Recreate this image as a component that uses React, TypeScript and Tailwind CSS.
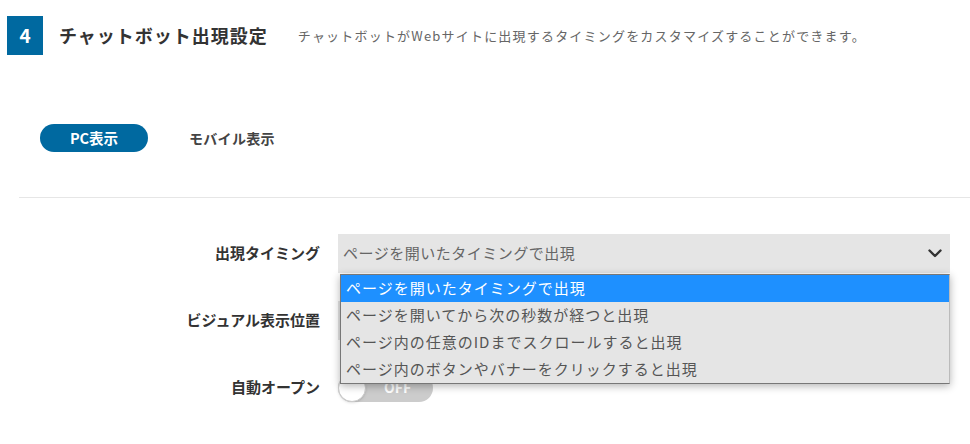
import React from "react";

const FONT = { fontFamily: '"Noto Sans CJK JP", "Noto Sans", sans-serif' };

function Chevron() {
  return (
    <svg width="14" height="9" viewBox="0 0 14 9" className="block">
      <path d="M1.5 1.5 L7 7 L12.5 1.5" fill="none" stroke="#333" strokeWidth="2.4" strokeLinecap="round" strokeLinejoin="round" />
    </svg>
  );
}

const options = [
  "ページを開いたタイミングで出現",
  "ページを開いてから次の秒数が経つと出現",
  "ページ内の任意のIDまでスクロールすると出現",
  "ページ内のボタンやバナーをクリックすると出現",
];

export default function App() {
  return (
    <div className="relative w-[970px] h-[444px] overflow-hidden bg-white text-[#333]" style={FONT}>
      {/* Header */}
      <div className="flex items-center pt-[16px] pl-[7px]">
        <div className="w-[36px] h-[39px] bg-[#0069a0] text-white font-bold text-[19px] flex items-center justify-center">4</div>
        <div className="ml-[16px] text-[18px] font-bold tracking-[1px] text-[#333]">チャットボット出現設定</div>
        <div className="ml-[30px] text-[13px] tracking-[1.2px] text-[#666]">チャットボットがWebサイトに出現するタイミングをカスタマイズすることができます。</div>
      </div>

      {/* Tabs */}
      <div className="flex items-center mt-[69px] pl-[40px]">
        <div className="w-[108px] h-[28px] rounded-full bg-[#0069a0] text-white font-bold text-[14.5px] flex items-center justify-center">PC表示</div>
        <div className="ml-[41px] text-[14px] font-bold text-[#444] tracking-[0.3px]">モバイル表示</div>
      </div>

      {/* Divider */}
      <div className="ml-[19px] mt-[45px] h-px bg-[#e6e6e6]" />

      {/* Form */}
      <div className="mt-[36px] flex flex-col gap-[28px]">
        <div className="flex items-center h-[39px]">
          <div className="w-[320px] text-right text-[15px] font-bold text-[#333]">出現タイミング</div>
          <div className="ml-[18px] w-[612px] h-[39px] bg-[#e5e5e5] flex items-center justify-between pl-[5px] pr-[8px]">
            <span className="text-[15px] tracking-[0.5px] text-[#666]">ページを開いたタイミングで出現</span>
            <Chevron />
          </div>
        </div>
        <div className="flex items-center h-[39px]">
          <div className="w-[320px] text-right text-[15px] font-bold text-[#333]">ビジュアル表示位置</div>
          <div className="ml-[18px] w-[612px] h-[39px] bg-[#e5e5e5]" />
        </div>
        <div className="flex items-center h-[39px]">
          <div className="w-[320px] text-right text-[15px] font-bold text-[#333]">自動オープン</div>
          <div className="ml-[18px] relative w-[95px] h-[28px] rounded-full bg-[#cccccc] flex items-center">
            <div className="absolute left-0 top-0 w-[28px] h-[28px] rounded-full bg-white border border-[#ccc] shadow-sm" />
            <span className="ml-[46px] text-[14px] font-bold text-white">OFF</span>
          </div>
        </div>
      </div>

      {/* Open dropdown list */}
      <div className="absolute left-[340px] top-[274px] w-[610px] bg-[#e5e5e5] border border-[#777] border-r-[#bbb] shadow-[0_2px_8px_rgba(0,0,0,0.3)]">
        {options.map((o, i) => (
          <div
            key={o}
            className={
              i === 0
                ? "h-[27px] flex items-center pl-[5px] bg-[#1e90ff] text-white text-[15px] tracking-[1px]"
                : "h-[27px] flex items-center pl-[5px] text-[#555] text-[15px] tracking-[1px]"
            }
          >
            {o}
          </div>
        ))}
      </div>
    </div>
  );
}
